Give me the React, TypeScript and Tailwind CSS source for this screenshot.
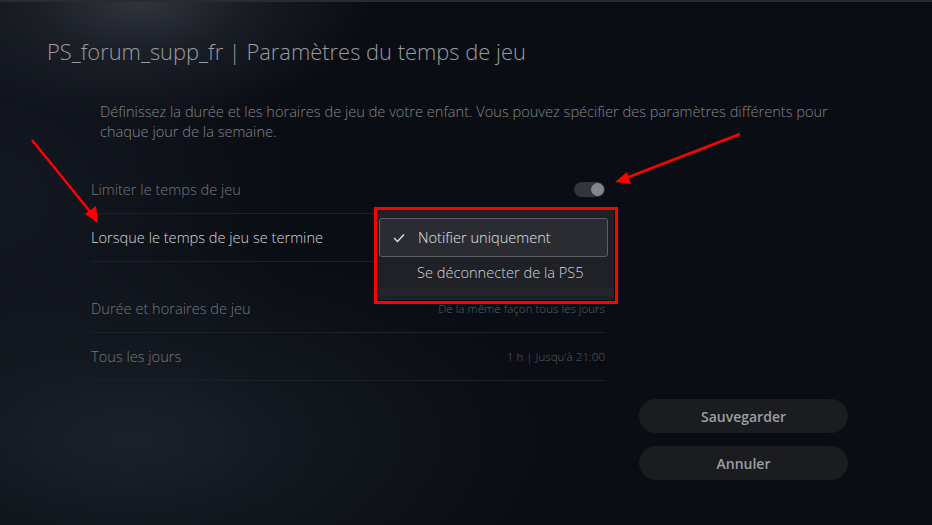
import React from "react";

const font = "font-['Open_Sans',sans-serif]";

function Row({
  label,
  right,
  labelClass = "text-[#75777c]",
  children,
}: {
  label: string;
  right?: string;
  labelClass?: string;
  children?: React.ReactNode;
}) {
  return (
    <div className="flex h-[48px] items-center justify-between border-b border-[#1d2027]">
      <span className={`text-[14.6px] font-light ${labelClass}`}>{label}</span>
      {right && <span className="text-[11.6px] font-light text-[#5c5e63]">{right}</span>}
      {children}
    </div>
  );
}

export default function App() {
  return (
    <div
      className={`${font} relative h-[525px] w-[932px] overflow-hidden bg-[#0a0d13] bg-[radial-gradient(ellipse_230px_120px_at_140px_0px,#31353e_0%,rgba(40,44,52,0.5)_45%,transparent_100%),radial-gradient(ellipse_420px_200px_at_130px_440px,#1b212b_0%,rgba(22,27,35,0.6)_50%,transparent_100%),radial-gradient(ellipse_300px_300px_at_0px_200px,#141821_0%,transparent_100%)]`}
    >
      <div className="h-[2px] bg-[#2a2b2e]" />
      <div className="pl-[47px] pt-[35px]">
        <h1 className="text-[21.9px] font-light leading-[30px] text-[#9a9ca2]">
          PS_forum_supp_fr | Paramètres du temps de jeu
        </h1>
      </div>
      <p className="ml-[100px] mt-[34px] w-[800px] text-[14.6px] font-light leading-[20px] text-[#84868b]">
        Définissez la durée et les horaires de jeu de votre enfant. Vous pouvez spécifier des paramètres différents pour
        <br />
        chaque jour de la semaine.
      </p>
      <div className="ml-[91px] mt-[25px] w-[514px]">
        <Row label="Limiter le temps de jeu">
          <div className="flex h-[15px] w-[31px] items-center justify-end rounded-full bg-[#33353a] pr-[1px]">
            <div className="h-[13px] w-[13px] rounded-full bg-[#85878c]" />
          </div>
        </Row>
        <Row label="Lorsque le temps de jeu se termine" labelClass="text-[#d6d7d9]" />
        <div className="h-[23px]" />
        <Row label="Durée et horaires de jeu" right="De la même façon tous les jours" />
        <Row label="Tous les jours" right="1 h | Jusqu'à 21:00" />
      </div>
      <div className="ml-[639px] mt-[18px] flex w-[209px] flex-col gap-[13px]">
        <button className="h-[34px] rounded-full bg-[#1a1c20] text-[14px] font-semibold text-[#9c9ea3]">
          Sauvegarder
        </button>
        <button className="h-[34px] rounded-full bg-[#1a1c20] text-[14px] font-semibold text-[#9c9ea3]">
          Annuler
        </button>
      </div>

      {/* Dropdown menu */}
      <div className="absolute left-[378px] top-[210px] h-[90px] w-[236px] bg-[#1f2127] pt-[8px]">
        <div className="ml-[1px] flex h-[39px] w-[229px] items-center rounded-[3px] border border-[#5d5f64] bg-[#2a2c31]">
          <svg className="ml-[13px] mr-[13px]" width="12" height="10" viewBox="0 0 12 10">
            <path d="M1 5 L4.5 8.5 L11 1.5" fill="none" stroke="#e0e0e2" strokeWidth="1.4" />
          </svg>
          <span className="text-[14.6px] font-light text-[#e2e3e5]">Notifier uniquement</span>
        </div>
        <div className="flex h-[31px] items-center pl-[39px] text-[14.6px] font-light text-[#d5d6d8]">
          Se déconnecter de la PS5
        </div>
        <div className="h-[8px] bg-[#24262b]" />
      </div>
      <div className="pointer-events-none absolute left-[374px] top-[207px] h-[97px] w-[244px] border-[3px] border-[#ff0000]" />

      {/* annotation arrows */}
      <svg className="pointer-events-none absolute left-0 top-0" width="932" height="525">
        <line x1="32" y1="140" x2="92" y2="214" stroke="#ff0000" strokeWidth="2.5" />
        <polygon points="98,223 85,214 96,206" fill="#ff0000" />
        <line x1="740" y1="134" x2="626" y2="178" stroke="#ff0000" strokeWidth="2.5" />
        <polygon points="615,182 627,172 631,184" fill="#ff0000" />
      </svg>
    </div>
  );
}
